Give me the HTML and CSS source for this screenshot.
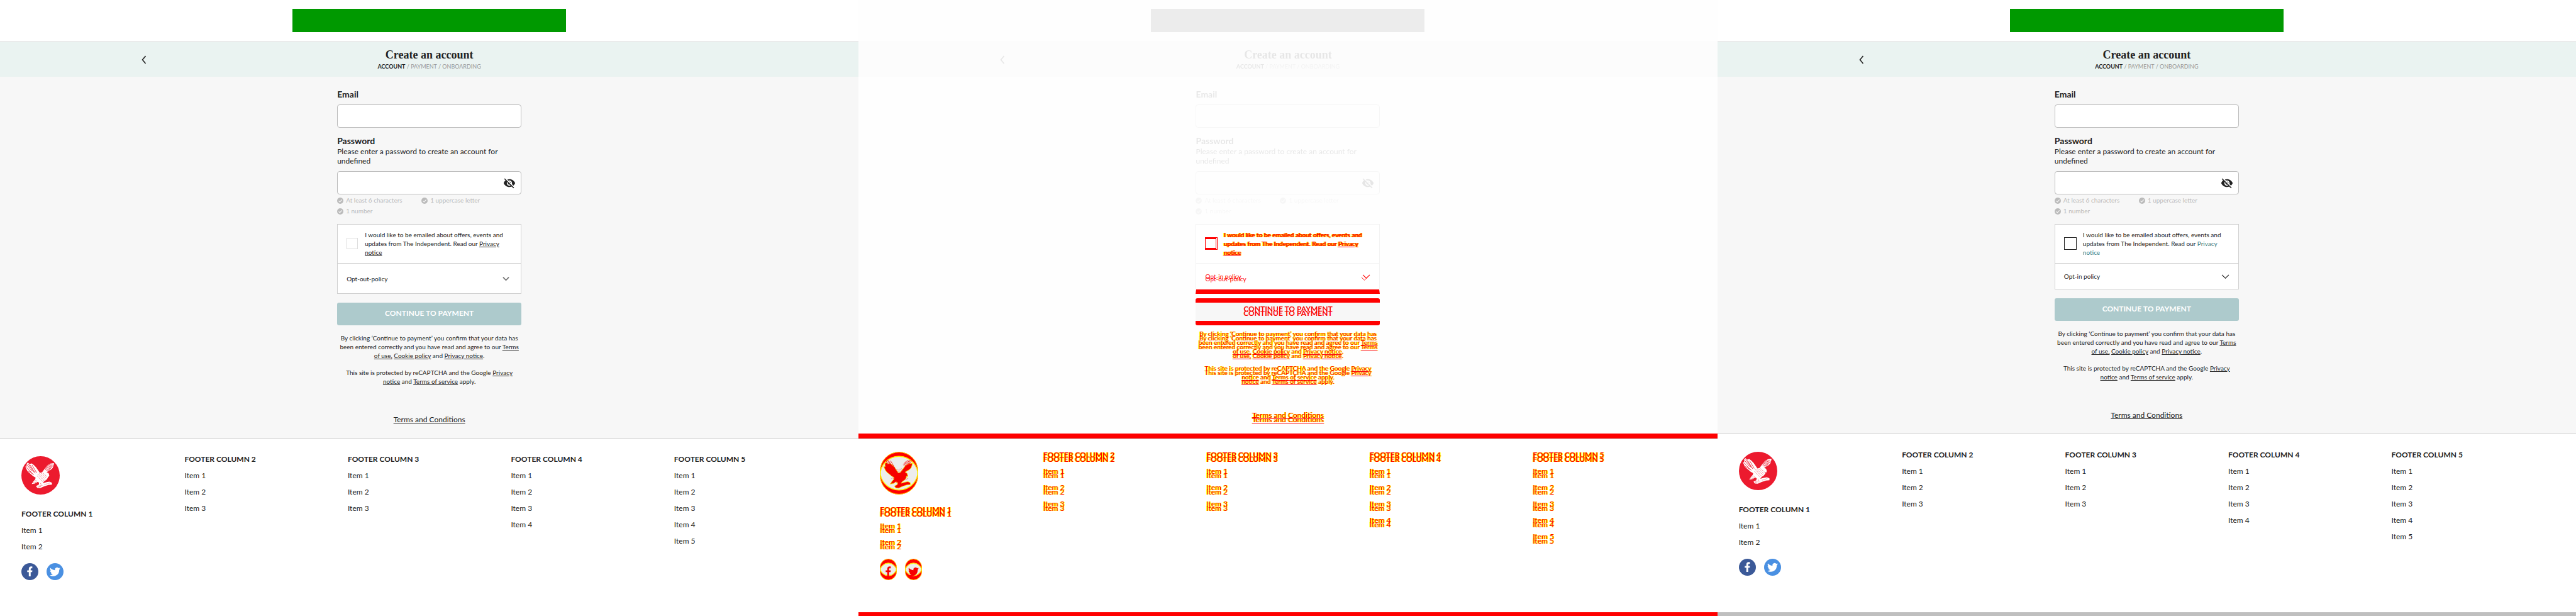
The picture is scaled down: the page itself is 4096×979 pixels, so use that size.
FILE: index.html
```html
<!DOCTYPE html>
<html lang="en">
<head>
<meta charset="utf-8">
<title>Create an account</title>
<link rel="stylesheet" href="styles.css">
</head>
<body>
<svg class="defs" aria-hidden="true">
  <symbol id="bird" viewBox="0 0 216 216">
    <path d="M36 35 L46 44 58 41 70 50 82 62 92 76 104 94 116 91 126 78 134 66 146 52 164 42 184 39 181 52 176 66 166 76 152 84 142 90 153 96 157 108 154 118 150 112 149 122 140 134 128 142 120 152 142 146 158 143 172 150 172 160 152 162 128 170 106 180 90 179 82 168 98 160 100 150 92 144 76 154 58 157 68 142 78 130 80 120 66 112 52 100 44 94 34 84 28 72 22 58 30 58 28 46 Z"/>
  </symbol>
  <symbol id="feathers" viewBox="0 0 216 216">
    <g fill="none" stroke-width="3">
      <path d="M30 46 60 84 M38 42 70 90 M48 48 78 96 M60 50 86 94 M28 62 62 98 M36 82 70 104 M134 78 160 46 M140 82 168 46 M146 84 174 48 M154 82 178 52 M132 72 150 52"/>
      <path stroke-dasharray="3 4" d="M92 100 128 138 M100 98 136 132 M110 96 142 124 M120 94 146 116 M88 110 120 144 M66 152 84 134 M74 152 90 138 M94 168 122 164 M130 160 162 150 M92 174 112 170 M108 152 112 164"/>
    </g>
  </symbol>
  <symbol id="logo" viewBox="0 0 216 216">
    <circle cx="108" cy="108" r="108" fill="#ec1a2e"/>
    <use href="#bird" fill="#fff"/>
    <use href="#feathers" stroke="#ec1a2e"/>
  </symbol>
  <symbol id="fb-glyph" viewBox="0 0 32 32"><path d="M14 25v-8h-3v-3.500h3v-2.500c0-3.200 1.600-4.700 4.400-4.700h2.200v3.400h-1.600c-1.200 0-1.500.6-1.500 1.600v2.200h3.200l-.4 3.500h-2.800v8z"/></symbol>
  <symbol id="tw-glyph" viewBox="0 0 32 32"><path d="M26 10.100c-.7.300-1.500.6-2.400.7.900-.5 1.500-1.300 1.800-2.300-.8.500-1.700.8-2.600 1a4.100 4.100 0 0 0-7 3.700c-3.400-.2-6.400-1.800-8.500-4.300-1.100 1.900-.5 4.300 1.300 5.500-.7 0-1.300-.2-1.900-.5 0 2 1.400 3.700 3.300 4.100-.6.200-1.200.2-1.900.1.500 1.600 2 2.800 3.900 2.900A8.300 8.300 0 0 1 6 22.700 11.600 11.600 0 0 0 23.900 12.300c.8-.6 1.500-1.300 2.100-2.200z"/></symbol>
  <symbol id="facebook" viewBox="0 0 32 32"><circle cx="16" cy="16" r="16" fill="#3b5998"/><use href="#fb-glyph" fill="#fff"/></symbol>
  <symbol id="twitter" viewBox="0 0 32 32"><circle cx="16" cy="16" r="16" fill="#4a90e2"/><use href="#tw-glyph" fill="#fff"/></symbol>
  <symbol id="eye" viewBox="0 0 24 24"><path fill="#222" d="M12 7c2.760 0 5 2.240 5 5 0 .65-.13 1.260-.36 1.830l2.920 2.920c1.510-1.260 2.700-2.890 3.430-4.750-1.730-4.390-6-7.500-11-7.500-1.400 0-2.740.25-3.980.7l2.160 2.160C10.740 7.130 11.350 7 12 7zM2 4.270l2.280 2.280.46.460C3.080 8.300 1.780 10.020 1 12c1.730 4.390 6 7.500 11 7.500 1.550 0 3.030-.3 4.380-.84l.42.42L19.730 22 21 20.730 3.270 3 2 4.270zM7.530 9.800l1.550 1.550c-.05.21-.08.43-.08.650 0 1.660 1.340 3 3 3 .22 0 .44-.03.650-.08l1.550 1.550c-.67.33-1.410.53-2.200.53-2.760 0-5-2.240-5-5 0-.79.2-1.530.53-2.200zm4.310-.78l3.150 3.150.02-.16c0-1.660-1.340-3-3-3l-.17.010z"/></symbol>
  <symbol id="tick" viewBox="0 0 12 12"><circle cx="6" cy="6" r="6" fill="#bbb"/><path d="M3 6.200 5.200 8.300 9.200 4" fill="none" stroke="#f7f7f7" stroke-width="1.400"/></symbol>
  <symbol id="back" viewBox="0 0 8 14"><path d="M7 1 2 7l5 6" fill="none" stroke="#222" stroke-width="1.600"/></symbol>
  <symbol id="chevron" viewBox="0 0 12 8"><path d="M1 1.500 6 6.500l5-5" fill="none" stroke="currentColor"/></symbol>
  <clipPath id="disc"><circle cx="108" cy="108" r="108"/></clipPath>
  <clipPath id="disc-s"><circle cx="16" cy="16" r="16"/></clipPath>
  <symbol id="logo-old" viewBox="0 0 216 216"><g clip-path="url(#disc)"><circle cx="108" cy="108" r="108" fill="#f00"/><circle cx="108" cy="83" r="108" fill="#f6f6f6" stroke="#ff0" stroke-width="4"/></g><circle cx="108" cy="108" r="106" fill="none" stroke="#ff0" stroke-width="3"/><use href="#bird" fill="#f00" stroke="#ff0" stroke-width="3"/></symbol>
  <symbol id="logo-new" viewBox="0 0 216 216"><g clip-path="url(#disc)"><circle cx="108" cy="108" r="108" fill="#f00"/><circle cx="108" cy="133" r="108" fill="#f6f6f6" stroke="#ff0" stroke-width="4"/></g><circle cx="108" cy="108" r="106" fill="none" stroke="#ff0" stroke-width="3"/><use href="#feathers" stroke="#f00"/></symbol>
  <symbol id="dot-old" viewBox="0 0 32 32"><g clip-path="url(#disc-s)"><circle cx="16" cy="16" r="16" fill="#f00"/><circle cx="16" cy="8" r="16" fill="#f6f6f6" stroke="#ff0"/></g><circle cx="16" cy="16" r="15.500" fill="none" stroke="#ff0"/></symbol>
  <symbol id="dot-new" viewBox="0 0 32 32"><g clip-path="url(#disc-s)"><circle cx="16" cy="16" r="16" fill="#f00"/><circle cx="16" cy="24" r="16" fill="#f6f6f6" stroke="#ff0"/></g><circle cx="16" cy="16" r="15.500" fill="none" stroke="#ff0"/></symbol>
</svg>

<section class="panel">
  <div class="top">
    <div class="banner"><div class="banner-slot"></div></div>
    <header class="header">
      <button class="back" type="button" aria-label="Back"><svg class="back-icon"><use href="#back"/></svg></button>
      <div class="heading"><h1 class="title">Create an account</h1><p class="steps"><b class="step-now">ACCOUNT</b> / PAYMENT / ONBOARDING</p></div>
    </header>
    <div class="column fields">
      <label class="label" for="email-1">Email</label>
      <input class="input" id="email-1" type="email">
      <label class="label label-next" for="pass-1">Password</label>
      <p class="hint">Please enter a password to create an account for<br>undefined</p>
      <div class="password"><input class="input" id="pass-1" type="password"><button class="reveal" type="button" aria-label="Show password"><svg class="eye-icon"><use href="#eye"/></svg></button></div>
      <ul class="rules"><li class="rule"><svg class="tick-icon"><use href="#tick"/></svg>At least 6 characters</li><li class="rule"><svg class="tick-icon"><use href="#tick"/></svg>1 uppercase letter</li><li class="rule"><svg class="tick-icon"><use href="#tick"/></svg>1 number</li></ul>
    </div>
  </div>
  <div class="bottom">
    <div class="column">
      <div class="consent">
        <div class="consent-row"><input class="check" id="c-1" type="checkbox"><label class="consent-text" for="c-1">I would like to be emailed about offers, events and<br>updates from The Independent. Read our <a class="link" href="#">Privacy<br>notice</a></label></div>
        <button class="policy" type="button">Opt-out-policy<svg class="chevron"><use href="#chevron"/></svg></button>
      </div>
      <button class="submit" type="submit">CONTINUE TO PAYMENT</button>
      <p class="legal">By clicking ‘Continue to payment’ you confirm that your data has<br>been entered correctly and you have read and agree to our <a class="link" href="#">Terms<br>of use,</a> <a class="link" href="#">Cookie policy</a> and <a class="link" href="#">Privacy notice</a>.</p>
      <p class="legal">This site is protected by reCAPTCHA and the Google <a class="link" href="#">Privacy<br>notice</a> and <a class="link" href="#">Terms of service</a> apply.</p>
      <p class="terms"><a class="link" href="#">Terms and Conditions</a></p>
    </div>
    <footer class="footer">
      <div><svg class="logo"><use href="#logo"/></svg><h2 class="foot-title">FOOTER COLUMN 1</h2><ul class="foot-list"><li>Item 1</li><li>Item 2</li></ul><div class="social"><a href="#" aria-label="Facebook"><svg class="social-icon"><use href="#facebook"/></svg></a><a href="#" aria-label="Twitter"><svg class="social-icon"><use href="#twitter"/></svg></a></div></div>
      <div><h2 class="foot-title">FOOTER COLUMN 2</h2><ul class="foot-list"><li>Item 1</li><li>Item 2</li><li>Item 3</li></ul></div>
      <div><h2 class="foot-title">FOOTER COLUMN 3</h2><ul class="foot-list"><li>Item 1</li><li>Item 2</li><li>Item 3</li></ul></div>
      <div><h2 class="foot-title">FOOTER COLUMN 4</h2><ul class="foot-list"><li>Item 1</li><li>Item 2</li><li>Item 3</li><li>Item 4</li></ul></div>
      <div><h2 class="foot-title">FOOTER COLUMN 5</h2><ul class="foot-list"><li>Item 1</li><li>Item 2</li><li>Item 3</li><li>Item 4</li><li>Item 5</li></ul></div>
    </footer>
  </div>
</section>

<section class="panel diff">
  <div class="top faded">
    <div class="banner"><div class="banner-slot"></div></div>
    <header class="header">
      <button class="back" type="button" aria-label="Back"><svg class="back-icon"><use href="#back"/></svg></button>
      <div class="heading"><h1 class="title">Create an account</h1><p class="steps"><b class="step-now">ACCOUNT</b> / PAYMENT / ONBOARDING</p></div>
    </header>
    <div class="column fields">
      <label class="label" for="email-2">Email</label>
      <input class="input" id="email-2" type="email">
      <label class="label label-next" for="pass-2">Password</label>
      <p class="hint">Please enter a password to create an account for<br>undefined</p>
      <div class="password"><input class="input" id="pass-2" type="password"><button class="reveal" type="button" aria-label="Show password"><svg class="eye-icon"><use href="#eye"/></svg></button></div>
      <ul class="rules"><li class="rule"><svg class="tick-icon"><use href="#tick"/></svg>At least 6 characters</li><li class="rule"><svg class="tick-icon"><use href="#tick"/></svg>1 uppercase letter</li><li class="rule"><svg class="tick-icon"><use href="#tick"/></svg>1 number</li></ul>
    </div>
  </div>
  <div class="stack">
    <div class="bottom layer-old">
      <div class="column">
        <div class="consent">
          <div class="consent-row"><input class="check" id="c-2" type="checkbox"><label class="consent-text" for="c-2">I would like to be emailed about offers, events and<br>updates from The Independent. Read our <a class="link" href="#">Privacy<br>notice</a></label></div>
          <button class="policy" type="button">Opt-out-policy<svg class="chevron"><use href="#chevron"/></svg></button>
        </div>
        <button class="submit" type="submit">CONTINUE TO PAYMENT</button>
        <p class="legal">By clicking ‘Continue to payment’ you confirm that your data has<br>been entered correctly and you have read and agree to our <a class="link" href="#">Terms<br>of use,</a> <a class="link" href="#">Cookie policy</a> and <a class="link" href="#">Privacy notice</a>.</p>
        <p class="legal">This site is protected by reCAPTCHA and the Google <a class="link" href="#">Privacy<br>notice</a> and <a class="link" href="#">Terms of service</a> apply.</p>
        <p class="terms"><a class="link" href="#">Terms and Conditions</a></p>
      </div>
      <footer class="footer">
        <div><svg class="logo"><use href="#logo-old"/></svg><h2 class="foot-title">FOOTER COLUMN 1</h2><ul class="foot-list"><li>Item 1</li><li>Item 2</li></ul><div class="social"><svg class="social-icon"><use href="#dot-old"/><use href="#fb-glyph" fill="#f00"/></svg><svg class="social-icon"><use href="#dot-old"/><use href="#tw-glyph" fill="#f00"/></svg></div></div>
        <div><h2 class="foot-title">FOOTER COLUMN 2</h2><ul class="foot-list"><li>Item 1</li><li>Item 2</li><li>Item 3</li></ul></div>
        <div><h2 class="foot-title">FOOTER COLUMN 3</h2><ul class="foot-list"><li>Item 1</li><li>Item 2</li><li>Item 3</li></ul></div>
        <div><h2 class="foot-title">FOOTER COLUMN 4</h2><ul class="foot-list"><li>Item 1</li><li>Item 2</li><li>Item 3</li><li>Item 4</li></ul></div>
        <div><h2 class="foot-title">FOOTER COLUMN 5</h2><ul class="foot-list"><li>Item 1</li><li>Item 2</li><li>Item 3</li><li>Item 4</li><li>Item 5</li></ul></div>
      </footer>
    </div>
    <div class="bottom opt-in layer-new">
      <div class="column">
        <div class="consent">
          <div class="consent-row"><input class="check" id="c-3" type="checkbox"><label class="consent-text" for="c-3">I would like to be emailed about offers, events and<br>updates from The Independent. Read our <a class="link" href="#">Privacy<br>notice</a></label></div>
          <button class="policy" type="button">Opt-in policy<svg class="chevron"><use href="#chevron"/></svg></button>
        </div>
        <button class="submit" type="submit">CONTINUE TO PAYMENT</button>
        <p class="legal">By clicking ‘Continue to payment’ you confirm that your data has<br>been entered correctly and you have read and agree to our <a class="link" href="#">Terms<br>of use,</a> <a class="link" href="#">Cookie policy</a> and <a class="link" href="#">Privacy notice</a>.</p>
        <p class="legal">This site is protected by reCAPTCHA and the Google <a class="link" href="#">Privacy<br>notice</a> and <a class="link" href="#">Terms of service</a> apply.</p>
        <p class="terms"><a class="link" href="#">Terms and Conditions</a></p>
      </div>
      <footer class="footer">
        <div><svg class="logo"><use href="#logo-new"/></svg><h2 class="foot-title">FOOTER COLUMN 1</h2><ul class="foot-list"><li>Item 1</li><li>Item 2</li></ul><div class="social"><svg class="social-icon"><use href="#dot-new"/></svg><svg class="social-icon"><use href="#dot-new"/></svg></div></div>
        <div><h2 class="foot-title">FOOTER COLUMN 2</h2><ul class="foot-list"><li>Item 1</li><li>Item 2</li><li>Item 3</li></ul></div>
        <div><h2 class="foot-title">FOOTER COLUMN 3</h2><ul class="foot-list"><li>Item 1</li><li>Item 2</li><li>Item 3</li></ul></div>
        <div><h2 class="foot-title">FOOTER COLUMN 4</h2><ul class="foot-list"><li>Item 1</li><li>Item 2</li><li>Item 3</li><li>Item 4</li></ul></div>
        <div><h2 class="foot-title">FOOTER COLUMN 5</h2><ul class="foot-list"><li>Item 1</li><li>Item 2</li><li>Item 3</li><li>Item 4</li><li>Item 5</li></ul></div>
      </footer>
    </div>
  </div>
</section>

<section class="panel">
  <div class="top">
    <div class="banner"><div class="banner-slot"></div></div>
    <header class="header">
      <button class="back" type="button" aria-label="Back"><svg class="back-icon"><use href="#back"/></svg></button>
      <div class="heading"><h1 class="title">Create an account</h1><p class="steps"><b class="step-now">ACCOUNT</b> / PAYMENT / ONBOARDING</p></div>
    </header>
    <div class="column fields">
      <label class="label" for="email-4">Email</label>
      <input class="input" id="email-4" type="email">
      <label class="label label-next" for="pass-4">Password</label>
      <p class="hint">Please enter a password to create an account for<br>undefined</p>
      <div class="password"><input class="input" id="pass-4" type="password"><button class="reveal" type="button" aria-label="Show password"><svg class="eye-icon"><use href="#eye"/></svg></button></div>
      <ul class="rules"><li class="rule"><svg class="tick-icon"><use href="#tick"/></svg>At least 6 characters</li><li class="rule"><svg class="tick-icon"><use href="#tick"/></svg>1 uppercase letter</li><li class="rule"><svg class="tick-icon"><use href="#tick"/></svg>1 number</li></ul>
    </div>
  </div>
  <div class="bottom opt-in">
    <div class="column">
      <div class="consent">
        <div class="consent-row"><input class="check" id="c-4" type="checkbox"><label class="consent-text" for="c-4">I would like to be emailed about offers, events and<br>updates from The Independent. Read our <a class="link" href="#">Privacy<br>notice</a></label></div>
        <button class="policy" type="button">Opt-in policy<svg class="chevron"><use href="#chevron"/></svg></button>
      </div>
      <button class="submit" type="submit">CONTINUE TO PAYMENT</button>
      <p class="legal">By clicking ‘Continue to payment’ you confirm that your data has<br>been entered correctly and you have read and agree to our <a class="link" href="#">Terms<br>of use,</a> <a class="link" href="#">Cookie policy</a> and <a class="link" href="#">Privacy notice</a>.</p>
      <p class="legal">This site is protected by reCAPTCHA and the Google <a class="link" href="#">Privacy<br>notice</a> and <a class="link" href="#">Terms of service</a> apply.</p>
      <p class="terms"><a class="link" href="#">Terms and Conditions</a></p>
    </div>
    <footer class="footer">
      <div><svg class="logo"><use href="#logo"/></svg><h2 class="foot-title">FOOTER COLUMN 1</h2><ul class="foot-list"><li>Item 1</li><li>Item 2</li></ul><div class="social"><a href="#" aria-label="Facebook"><svg class="social-icon"><use href="#facebook"/></svg></a><a href="#" aria-label="Twitter"><svg class="social-icon"><use href="#twitter"/></svg></a></div></div>
      <div><h2 class="foot-title">FOOTER COLUMN 2</h2><ul class="foot-list"><li>Item 1</li><li>Item 2</li><li>Item 3</li></ul></div>
      <div><h2 class="foot-title">FOOTER COLUMN 3</h2><ul class="foot-list"><li>Item 1</li><li>Item 2</li><li>Item 3</li></ul></div>
      <div><h2 class="foot-title">FOOTER COLUMN 4</h2><ul class="foot-list"><li>Item 1</li><li>Item 2</li><li>Item 3</li><li>Item 4</li></ul></div>
      <div><h2 class="foot-title">FOOTER COLUMN 5</h2><ul class="foot-list"><li>Item 1</li><li>Item 2</li><li>Item 3</li><li>Item 4</li><li>Item 5</li></ul></div>
    </footer>
  </div>
</section>
</body>
</html>
```
FILE: styles.css
```css
* { box-sizing: border-box; }

body {
  margin: 0;
  min-height: 100vh;
  display: grid;
  grid-template-columns: repeat(3, minmax(0, 1fr));
  font: 12px/16px Lato, "Open Sans", sans-serif;
  color: #222;
  background: #fff;
}

h1, h2, p, ul { margin: 0; padding: 0; }
ul { list-style: none; }
svg { display: block; }
button { border: 0; padding: 0; background: none; font: inherit; color: inherit; }
.defs { position: absolute; width: 0; height: 0; }

.panel { display: flex; flex-direction: column; background: #f7f7f7; }

.banner { padding: 14px 0 15px; background: #fff; border-bottom: 1px solid #d0d3d2; }
.banner-slot { width: 435px; height: 37px; margin: 0 auto; background: #009900; }

.header {
  display: grid;
  grid-template-columns: 1fr auto 1fr;
  align-items: center;
  padding: 10px 0;
  background: #eaf3f1;
}
.back { justify-self: start; margin-left: 224px; }
.back-icon { width: 9px; height: 14px; }
.heading { text-align: center; }
.title { font: bold 18px/20px "Liberation Serif", serif; }
.steps { margin-top: 3px; font-size: 9px; line-height: 12px; color: #999; }
.step-now { color: #222; }

.column { width: 293px; margin: 0 auto; white-space: nowrap; }
.fields { padding: 19px 0 12px; }
.label { display: block; margin-bottom: 7px; font-size: 14px; line-height: 18px; font-weight: bold; }
.label-next { margin: 12px 0 0; }
.hint { margin-bottom: 9px; line-height: 15px; }
.input { display: block; width: 100%; height: 37px; border: 1px solid #bbb; border-radius: 4px; background: #fff; }
.password { position: relative; }
.reveal { position: absolute; right: 9px; top: 9px; }
.eye-icon { width: 20px; height: 20px; }
.rules { display: grid; grid-template-columns: 134px 1fr; padding-top: 1px; font-size: 10px; line-height: 17px; color: #bbb; }
.rule { display: flex; align-items: center; gap: 4px; }
.tick-icon { width: 10px; height: 10px; }

.bottom { flex: 1; display: flex; flex-direction: column; }
.consent { border: 1px solid #d0d0d0; background: #fff; font-size: 10px; line-height: 14px; }
.consent-row { display: flex; align-items: center; gap: 11px; padding: 9px 0 10px 14px; border-bottom: 1px solid #d0d0d0; }
.check { appearance: none; width: 18px; height: 18px; margin: 0; border: 1px solid #ddd; background: #fff; }
.policy { display: flex; align-items: center; justify-content: space-between; width: 100%; height: 47px; padding: 0 18px 0 14px; }
.chevron { width: 11px; height: 8px; color: #777; stroke-width: 2; }
.submit { display: block; width: 100%; height: 36px; margin: 14px 0 13px; padding-bottom: 2px; border-radius: 3px; background: #adcacc; color: #fff; font-weight: bold; }
.legal { margin-bottom: 13px; text-align: center; font-size: 10px; line-height: 14px; }
.terms { margin: 46px 0 21px; text-align: center; }
.link { color: inherit; text-decoration: underline; }

.footer {
  flex: 1;
  display: grid;
  grid-template-columns: repeat(5, minmax(0, 1fr));
  padding: 25px 34px 24px;
  border-top: 1px solid #d0d0d0;
  background: #fff;
}
.logo { width: 61px; height: 61px; margin: 3px 0 23px; }
.foot-title { margin-bottom: 10px; font-size: 12px; line-height: 16px; }
.foot-list { display: grid; gap: 10px; }
.social { display: flex; gap: 13px; margin-top: 18px; }
.social-icon { width: 27px; height: 27px; }

.opt-in { border-bottom: 6px solid #bfbfbf; }
.opt-in .consent-row { gap: 10px; }
.opt-in .check { width: 20px; height: 20px; border-color: #222; }
.opt-in .policy { height: 40px; padding-right: 14px; }
.opt-in .chevron { width: 13px; height: 9px; color: #222; stroke-width: 1; }
.opt-in .consent-text .link { color: #3b8083; text-decoration: none; }

.diff { background: #fefefe; }
.faded { filter: grayscale(1); opacity: 0.1; }
.faded .banner-slot { background: #555; }
.stack { flex: 1; display: grid; }
.layer-old, .layer-new {
  grid-area: 1 / 1;
  color: #f00;
  text-shadow: 1px 0 #ff0, -1px 0 #ff0;
}
.layer-new { mix-blend-mode: multiply; border-bottom-color: #f00; }
.diff .consent, .diff .consent-row { border-color: #f9f9f9; }
.diff .layer-old .consent { border-bottom: 7px solid #f00; }
.diff .layer-old .policy { height: 41px; padding-top: 6px; }
.diff .check { border-color: #f00; }
.diff .layer-old .check { border-width: 2px 1px; }
.diff .chevron { color: #f00; stroke-width: 1; }
.diff .consent-text .link { color: #f00; }
.diff .submit { color: #f00; }
.layer-old .submit { background: linear-gradient(to top, #f00 7px, #fbfbfb 7px); }
.layer-new .submit { background: linear-gradient(#f00 7px, #fbfbfb 7px); }
.layer-new .footer { border-top: 8px solid #f00; padding-top: 18px; }
```
